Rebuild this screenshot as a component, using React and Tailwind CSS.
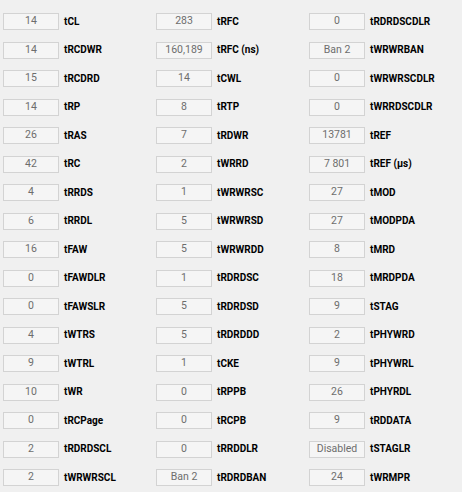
const columns = [
  [
    ["14", "tCL"],
    ["14", "tRCDWR"],
    ["15", "tRCDRD"],
    ["14", "tRP"],
    ["26", "tRAS"],
    ["42", "tRC"],
    ["4", "tRRDS"],
    ["6", "tRRDL"],
    ["16", "tFAW"],
    ["0", "tFAWDLR"],
    ["0", "tFAWSLR"],
    ["4", "tWTRS"],
    ["9", "tWTRL"],
    ["10", "tWR"],
    ["0", "tRCPage"],
    ["2", "tRDRDSCL"],
    ["2", "tWRWRSCL"],
  ],
  [
    ["283", "tRFC"],
    ["160,189", "tRFC (ns)"],
    ["14", "tCWL"],
    ["8", "tRTP"],
    ["7", "tRDWR"],
    ["2", "tWRRD"],
    ["1", "tWRWRSC"],
    ["5", "tWRWRSD"],
    ["5", "tWRWRDD"],
    ["1", "tRDRDSC"],
    ["5", "tRDRDSD"],
    ["5", "tRDRDDD"],
    ["1", "tCKE"],
    ["0", "tRPPB"],
    ["0", "tRCPB"],
    ["0", "tRRDDLR"],
    ["Ban 2", "tRDRDBAN"],
  ],
  [
    ["0", "tRDRDSCDLR"],
    ["Ban 2", "tWRWRBAN"],
    ["0", "tWRWRSCDLR"],
    ["0", "tWRRDSCDLR"],
    ["13781", "tREF"],
    ["7 801", "tREF (µs)"],
    ["27", "tMOD"],
    ["27", "tMODPDA"],
    ["8", "tMRD"],
    ["18", "tMRDPDA"],
    ["9", "tSTAG"],
    ["2", "tPHYWRD"],
    ["9", "tPHYWRL"],
    ["26", "tPHYRDL"],
    ["9", "tRDDATA"],
    ["Disabled", "tSTAGLR"],
    ["24", "tWRMPR"],
  ],
];

function TimingField({ value, label }) {
  return (
    <div className="flex items-center gap-[5px] h-[17px]">
      <div className="w-[56px] h-[17px] shrink-0 border border-[#d3d3d3] bg-[#f5f5f5] flex items-center justify-center text-[10.5px] text-[#6d6d6d] font-['Roboto',sans-serif] leading-none">
        {value}
      </div>
      <span className="text-[10px] font-bold text-black font-['Roboto',sans-serif] leading-none whitespace-nowrap">
        {label}
      </span>
    </div>
  );
}

export default function App() {
  return (
    <div className="w-[462px] h-[492px] bg-[#f0f0f0] overflow-hidden pt-[13px] pl-[3px]">
      <div className="grid grid-cols-[153px_153px_1fr]">
        {columns.map((col, ci) => (
          <div key={ci} className="flex flex-col gap-[11.5px]">
            {col.map(([value, label]) => (
              <TimingField key={label} value={value} label={label} />
            ))}
          </div>
        ))}
      </div>
    </div>
  );
}
